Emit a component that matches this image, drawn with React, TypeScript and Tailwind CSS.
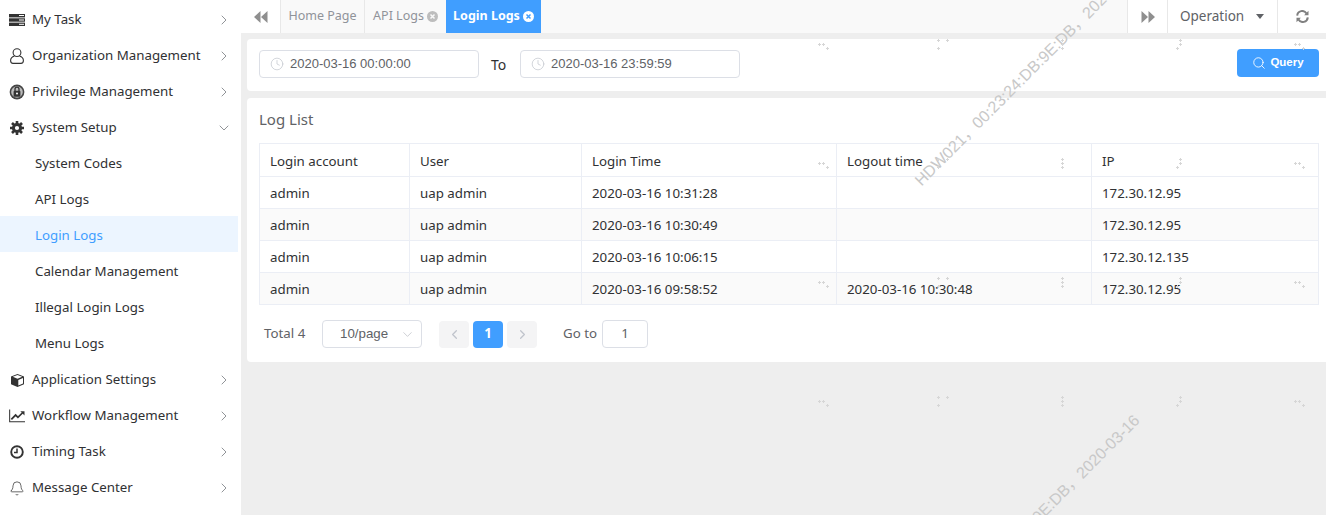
import React from "react";
import { ChevronRight, ChevronDown, ChevronLeft, Clock, Search, Bell } from "lucide-react";

const F = "font-['Noto_Sans','Open_Sans',sans-serif]";
const R = "font-['Liberation_Sans',Arial,sans-serif]";

const Server = () => (
  <svg width="16" height="14" viewBox="0 0 16 14" fill="#333"><rect x="0" y="1" width="16" height="3.4" /><rect x="0" y="5.3" width="16" height="3.4" /><rect x="0" y="9.6" width="16" height="3.4" /><rect x="10" y="2" width="5" height="1" fill="#fff" /><rect x="10" y="6.5" width="5" height="1" fill="#fff" /><rect x="10" y="10.8" width="5" height="1" fill="#fff" /></svg>
);
const Person = () => (
  <svg width="14" height="16" viewBox="0 0 14 16" fill="none" stroke="#333" strokeWidth="1.1"><circle cx="7" cy="4.6" r="3.9" /><path d="M4.500 8C2 8.800.6 10.400.6 12.500c0 1.700.8 2.900 2.400 2.900h8c1.600 0 2.400-1.200 2.400-2.900 0-2.100-1.400-3.700-3.900-4.500" /></svg>
);
const Lock = () => (
  <svg width="16" height="16" viewBox="0 0 16 16"><circle cx="8" cy="8" r="7.400" fill="#444" /><circle cx="8" cy="8" r="5.800" fill="#bbb" /><rect x="4.600" y="6.800" width="6.800" height="6" rx="1" fill="#333" /><path d="M6 7V5.200a2 2 0 0 1 4 0V7" fill="none" stroke="#333" strokeWidth="1.3" /><circle cx="8" cy="9.600" r="1" fill="#fff" /></svg>
);
const Gear = () => (
  <svg width="14" height="14" viewBox="0 0 14 14"><circle cx="7" cy="7" r="3.600" fill="none" stroke="#333" strokeWidth="3" /><g stroke="#333" strokeWidth="2.600"><path d="M7 0v3M7 11v3M0 7h3M11 7h3M2 2l2 2M10 10l2 2M12 2l-2 2M4 10l-2 2" /></g></svg>
);
const Chart = () => (
  <svg width="17" height="14" viewBox="0 0 17 14" fill="none" stroke="#333"><path d="M.7 0v13.200H17" strokeWidth="1.100" /><path d="M2.500 10.500 7 6l2.500 2.500L15 3" strokeWidth="1.800" /><path d="M12 2h4.500v4.500z" fill="#333" stroke="none" /></svg>
);
const Timer = () => (
  <svg width="14" height="14" viewBox="0 0 14 14" fill="none" stroke="#333"><circle cx="7" cy="7" r="5.800" strokeWidth="1.900" /><path d="M7 3.500V7.400H4" strokeWidth="1.500" /></svg>
);
const Cube = () => (
  <svg width="15" height="15" viewBox="0 0 15 15"><path d="M7.500 1 14 3.600v7.600L7.500 14 1 11.200V3.600z" fill="#333" /><path d="M8.300 7 13 4.900v5.600L8.300 12.600z" fill="#fff" /><path d="M2.800 3.800 7.500 2l4.700 1.800-4.700 2z" fill="#fff" /></svg>
);
const Dbl = ({ flip }: { flip?: boolean }) => (
  <svg width="14" height="12" viewBox="0 0 14 12" fill="#8f8f8f" className={flip ? "rotate-180" : ""}><path d="M6.500 0v12L0 6zM13.500 0v12l-6.500-6z" /></svg>
);
const Refresh = () => (
  <svg width="13" height="13" viewBox="0 0 13 13" fill="none" stroke="#808080" strokeWidth="2"><path d="M1.200 5.600A5 5 0 0 1 10.500 3.500M11.800 7.400A5 5 0 0 1 2.500 9.500" /><path d="M12.500 .8v4.400H8.100zM.5 12.200V7.800h4.400z" fill="#808080" stroke="none" /></svg>
);
const Close = ({ bg, fg }: { bg: string; fg: string }) => (
  <svg width="11" height="11" viewBox="0 0 11 11"><circle cx="5.500" cy="5.500" r="5.500" fill={bg} /><path d="M3.500 3.500l4 4M7.500 3.500l-4 4" stroke={fg} strokeWidth="1.500" /></svg>
);

const Menu = ({ icon, label, open }: { icon: React.ReactNode; label: string; open?: boolean }) => (
  <div className="flex h-9 items-center pl-[9px] pr-[9px] pt-[4px] text-[#303133]">
    <span className="flex w-4 justify-center">{icon}</span>
    <span className="ml-[7px] flex-1 text-[13.300px]">{label}</span>
    {open ? <ChevronDown size={16} strokeWidth={1.300} color="#808388" /> : <ChevronRight size={16} strokeWidth={1.300} color="#808388" />}
  </div>
);
const Sub = ({ label, active }: { label: string; active?: boolean }) => (
  <div className={`flex h-9 w-[238px] items-center pl-[35px] pt-[4px] text-[13.300px] ${active ? "bg-[#ecf5ff] text-[#409eff]" : "text-[#303133]"}`}>{label}</div>
);

const DateBox = ({ value }: { value: string }) => (
  <div className="flex h-[28px] w-[220px] items-center rounded border border-[#dcdfe6] pl-[10px]">
    <Clock size={14} strokeWidth={1.200} color="#c0c4cc" />
    <span className={`ml-[6px] text-[13px] text-[#606266] ${R}`}>{value}</span>
  </div>
);

const rows = [
  ["2020-03-16 10:31:28", "", "172.30.12.95"],
  ["2020-03-16 10:30:49", "", "172.30.12.95"],
  ["2020-03-16 10:06:15", "", "172.30.12.135"],
  ["2020-03-16 09:58:52", "2020-03-16 10:30:48", "172.30.12.95"],
];
const cell = "border-r border-b border-[#ebeef5] pl-[10px] flex items-center";
const grid = "grid grid-cols-[150px_172px_255px_255px_227px]";

const Mark = ({ className }: { className: string }) => (
  <div className={`pointer-events-none absolute h-[18px] w-[320px] -rotate-45 whitespace-nowrap font-['Liberation_Sans','Noto_Sans_CJK_SC',sans-serif] text-[16px] leading-[18px] text-[#c8c8c8] ${className}`}>HDW021，00:23:24:DB:9E:DB，2020-03-16</div>
);

const pattern: [number, number[][]][] = [
  [818, [[1, 4], [5, 4], [9, 8]]],
  [938, [[0, 0], [9, 0], [0, 8]]],
  [1058, [[4, 0], [4, 4], [4, 8]]],
  [1178, [[2, 0], [2, 4], [-1, 8]]],
  [1298, [[-3, 4], [1, 4], [5, 8]]],
];
const plusPath = [40, 159, 278, 397]
  .flatMap((y) => pattern.flatMap(([x, pts]) => pts.map(([dx, dy]) => `M${x + dx - 1} ${y + dy + 0.5}h3M${x + dx + 0.5} ${y + dy - 1}v3`)))
  .join("");

export default function App() {
  return (
    <div className={`relative flex h-[515px] w-[1326px] overflow-hidden bg-white ${F}`}>
      <aside className="w-[241px] shrink-0">
        <Menu icon={<Server />} label="My Task" />
        <Menu icon={<Person />} label="Organization Management" />
        <Menu icon={<Lock />} label="Privilege Management" />
        <Menu icon={<Gear />} label="System Setup" open />
        <Sub label="System Codes" />
        <Sub label="API Logs" />
        <Sub label="Login Logs" active />
        <Sub label="Calendar Management" />
        <Sub label="Illegal Login Logs" />
        <Sub label="Menu Logs" />
        <Menu icon={<Cube />} label="Application Settings" />
        <Menu icon={<Chart />} label="Workflow Management" />
        <Menu icon={<Timer />} label="Timing Task" />
        <Menu icon={<Bell size={17} strokeWidth={1.100} color="#333" />} label="Message Center" />
      </aside>

      <main className="flex min-w-0 flex-1 flex-col bg-[#eeeeee]">
        <div className="flex h-[33px] shrink-0 items-stretch bg-[#f9f9f9] text-[12.500px] text-[#909399]">
          <div className="flex w-[40px] items-center justify-center border-r border-[#e8e8e8] bg-white"><Dbl /></div>
          <div className="flex w-[84px] items-center justify-center border-r border-[#e8e8e8]">Home Page</div>
          <div className="flex w-[81px] items-center justify-center gap-[3px]">API Logs <Close bg="#bdbdbd" fg="#f9f9f9" /></div>
          <div className="flex w-[95px] items-center justify-center gap-[3px] bg-[#409eff] font-bold text-white">Login Logs <Close bg="#fff" fg="#409eff" /></div>
          <div className="flex-1" />
          <div className="flex w-[41px] items-center justify-center border-x border-[#e8e8e8] bg-white"><Dbl flip /></div>
          <div className="flex w-[110px] items-center border-r border-[#e8e8e8] bg-white pl-[12px] text-[13.500px] text-[#606266]">
            Operation
            <span className="ml-[12px] h-0 w-0 border-x-[4px] border-t-[5px] border-x-transparent border-t-[#606266]" />
          </div>
          <div className="flex w-[48px] items-center justify-center bg-white"><Refresh /></div>
        </div>

        <section className="ml-[6px] mt-[6px] flex h-[52px] shrink-0 items-start rounded-l-[4px] bg-white pl-[12px] pr-[7px] pt-[10px]">
          <div className="mt-px flex items-center">
            <DateBox value="2020-03-16 00:00:00" />
            <span className="ml-[12px] w-[29px] text-[14px] text-[#303133]">To</span>
            <DateBox value="2020-03-16 23:59:59" />
          </div>
          <div className="flex-1" />
          <button className={`flex h-[28px] w-[82px] items-center justify-center gap-[4px] rounded bg-[#409eff] text-[11.500px] font-bold text-white ${R}`}>
            <Search size={14} strokeWidth={1.500} /> Query
          </button>
        </section>

        <section className="ml-[6px] mt-[7px] h-[264px] shrink-0 rounded-l-[4px] bg-white pl-[12px] pr-[7px]">
          <h2 className="pt-[9px] text-[15px] font-normal leading-[24px] text-[#606266]">Log List</h2>
          <div className="mt-[12px] w-[1060px] border-l border-t border-[#ebeef5] text-[13.300px] text-[#303133]">
            <div className={`${grid} h-[33px]`}>
              {["Login account", "User", "Login Time", "Logout time", "IP"].map((h) => (
                <div key={h} className={`${cell} pt-[3px]`}>{h}</div>
              ))}
            </div>
            {rows.map((r, i) => (
              <div key={i} className={`${grid} h-[32px] ${i % 2 ? "bg-[#fafafa]" : ""}`}>
                {["admin", "uap admin", r[0], r[1], r[2]].map((c, j) => (
                  <div key={j} className={`${cell} pt-[2px]`}>{c}</div>
                ))}
              </div>
            ))}
          </div>
          <div className="mt-[15px] flex h-[28px] items-center pl-[5px] text-[13.300px] text-[#606266]">
            <span className="w-[58px]">Total 4</span>
            <div className="flex h-[28px] w-[100px] items-center justify-between rounded border border-[#dcdfe6] pl-[17px] pr-[6px]">
              <span className={R}>10/page</span> <ChevronDown size={15} strokeWidth={1} color="#b0b4bc" />
            </div>
            <div className="ml-[17px] flex gap-[4px]">
              <span className="flex h-[27px] w-[30px] items-center justify-center rounded-sm bg-[#f4f4f5]"><ChevronLeft size={15} color="#c0c4cc" /></span>
              <span className="flex h-[27px] w-[30px] items-center justify-center rounded-sm bg-[#409eff] font-bold text-white">1</span>
              <span className="flex h-[27px] w-[30px] items-center justify-center rounded-sm bg-[#f4f4f5]"><ChevronRight size={15} color="#c0c4cc" /></span>
            </div>
            <span className="ml-[26px]">Go to</span>
            <span className="ml-[5px] flex h-[28px] w-[46px] items-center justify-center rounded border border-[#dcdfe6]">1</span>
          </div>
        </section>
      </main>

      <Mark className="left-[871px] top-[61px]" />
      <Mark className="left-[865px] top-[521px]" />
      <svg className="pointer-events-none absolute inset-0" width="1326" height="515" fill="none">
        <path d={plusPath} stroke="#d6d6d6" strokeWidth="1" />
      </svg>
    </div>
  );
}
